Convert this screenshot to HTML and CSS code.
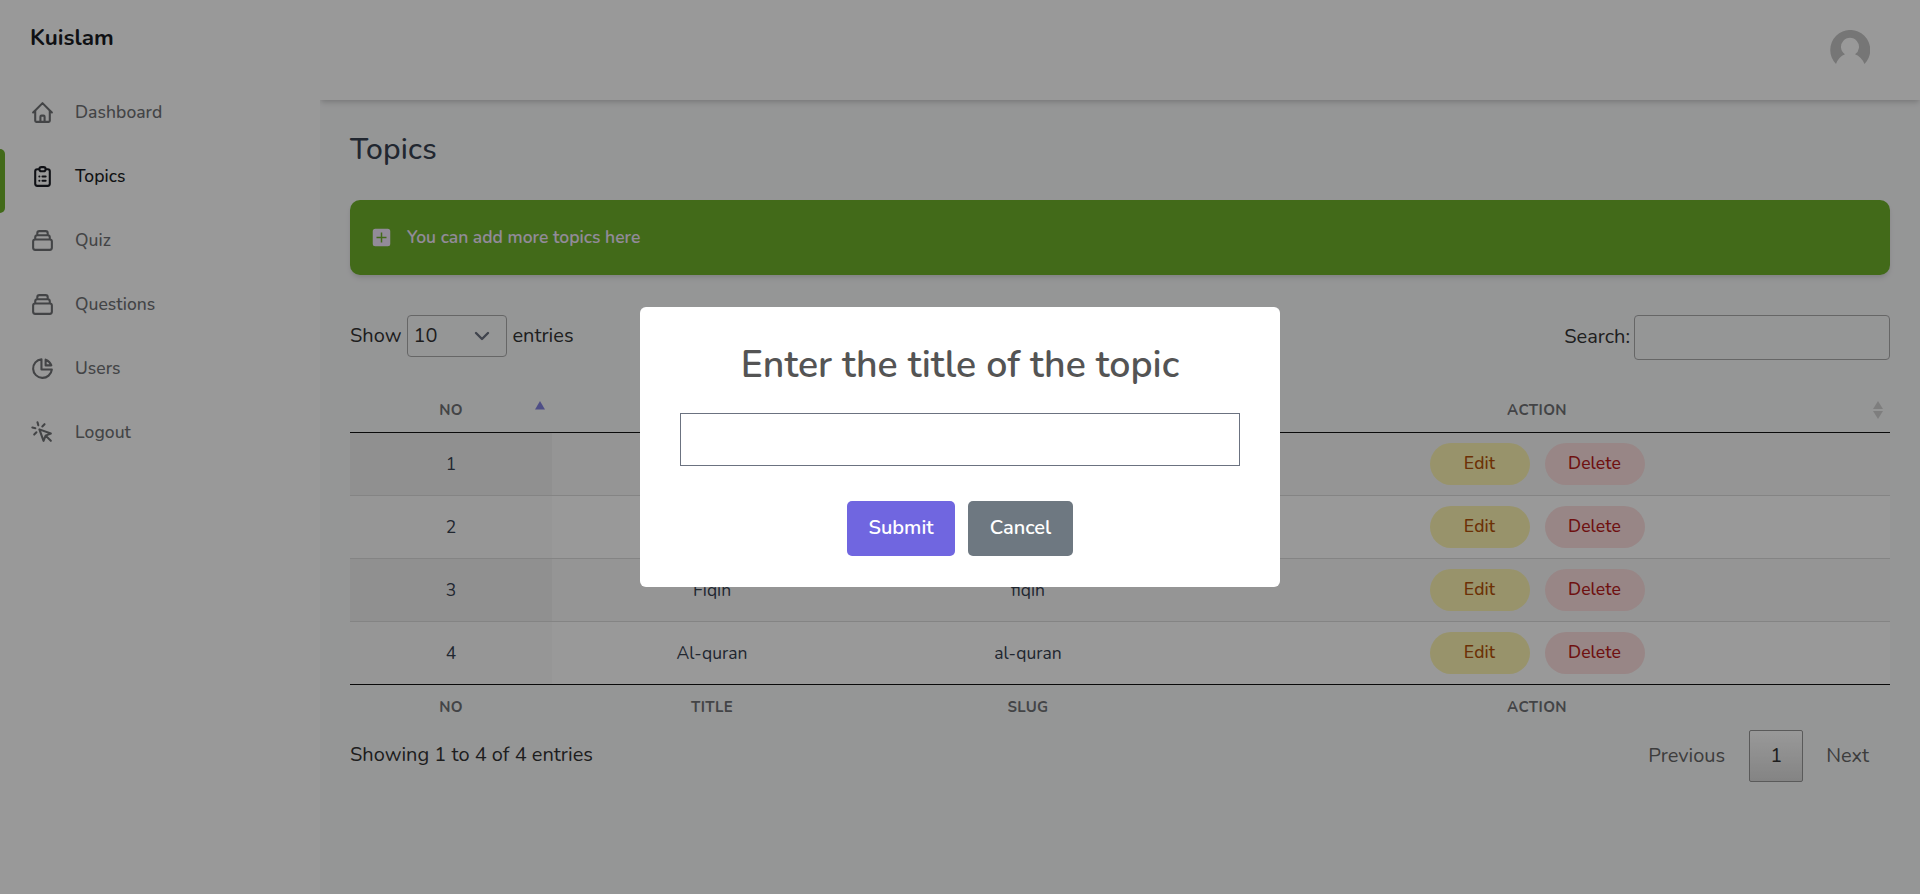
FILE: index.html
```
<!DOCTYPE html>
<html lang="en">
<head>
<meta charset="utf-8">
<title>Kuislam - Topics</title>
<link rel="stylesheet" href="styles.css">
</head>
<body>
<div class="app">
  <aside class="sidebar">
    <a class="brand">Kuislam</a>
    <ul class="nav">
      <li class="nav-item"><svg class="icon" viewBox="0 0 24 24"><path d="M3 12l2-2m0 0l7-7 7 7M5 10v10a1 1 0 001 1h3m10-11l2 2m-2-2v10a1 1 0 01-1 1h-3m-6 0a1 1 0 001-1v-4a1 1 0 011-1h2a1 1 0 011 1v4a1 1 0 001 1m-6 0h6"/></svg><span>Dashboard</span></li>
      <li class="nav-item active"><svg class="icon" viewBox="0 0 24 24"><path d="M9 5H7a2 2 0 00-2 2v12a2 2 0 002 2h10a2 2 0 002-2V7a2 2 0 00-2-2h-2M9 5a2 2 0 002 2h2a2 2 0 002-2M9 5a2 2 0 012-2h2a2 2 0 012 2m-3 7h3m-3 4h3m-6-4h.01M9 16h.01"/></svg><span>Topics</span></li>
      <li class="nav-item"><svg class="icon" viewBox="0 0 24 24"><path d="M19 11H5m14 0a2 2 0 012 2v6a2 2 0 01-2 2H5a2 2 0 01-2-2v-6a2 2 0 012-2m14 0V9a2 2 0 00-2-2M5 11V9a2 2 0 012-2m0 0V5a2 2 0 012-2h6a2 2 0 012 2v2M7 7h10"/></svg><span>Quiz</span></li>
      <li class="nav-item"><svg class="icon" viewBox="0 0 24 24"><path d="M19 11H5m14 0a2 2 0 012 2v6a2 2 0 01-2 2H5a2 2 0 01-2-2v-6a2 2 0 012-2m14 0V9a2 2 0 00-2-2M5 11V9a2 2 0 012-2m0 0V5a2 2 0 012-2h6a2 2 0 012 2v2M7 7h10"/></svg><span>Questions</span></li>
      <li class="nav-item"><svg class="icon" viewBox="0 0 24 24"><path d="M11 3.055A9.001 9.001 0 1020.945 13H11V3.055z"/><path d="M20.488 9H15V3.512A9.025 9.025 0 0120.488 9z"/></svg><span>Users</span></li>
      <li class="nav-item"><svg class="icon" viewBox="0 0 24 24"><path d="M15 15l-2 5L9 9l11 4-5 2zm0 0l5 5M7.188 2.239l.777 2.897M5.136 7.965l-2.898-.777M13.95 4.05l-2.122 2.122m-5.657 5.656l-2.12 2.122"/></svg><span>Logout</span></li>
    </ul>
  </aside>
  <div class="content">
    <header class="topbar">
      <svg class="avatar" viewBox="0 0 40 40"><path d="M6 34A20 20 0 1 1 34.500 34Q31.500 27 25 24.300A9 9 0 1 0 15 24.300Q8.500 27 6 34Z"/></svg>
    </header>
    <main class="main">
      <h2 class="title">Topics</h2>
      <a class="banner"><svg class="plus" viewBox="0 0 20 20"><path fill-rule="evenodd" d="M5 3a2 2 0 00-2 2v10a2 2 0 002 2h10a2 2 0 002-2V5a2 2 0 00-2-2H5zm4.400 3v3.400H6v1.200h3.400V14h1.200v-3.400H14V9.400h-3.400V6z"/></svg><span>You can add more topics here</span></a>
      <div class="controls">
        <div class="length"><span>Show</span><span class="select"><span>10</span><svg viewBox="0 0 20 20"><path d="M6 8l4 4 4-4"/></svg></span><span>entries</span></div>
        <label class="search"><span>Search:</span><input type="text"></label>
      </div>
      <div class="table">
        <div class="row head"><div>NO<svg class="sort" viewBox="0 0 10 18"><path class="asc" d="M0 8.500L5 0l5 8.500z"/></svg></div><div>TITLE</div><div>SLUG</div><div>ACTION<svg class="sort" viewBox="0 0 10 18"><path class="idle" d="M0 8L5 0l5 8zM0 10h10l-5 8z"/></svg></div></div>
        <div class="row odd"><div>1</div><div></div><div></div><div class="actions"><span class="pill edit">Edit</span><span class="pill delete">Delete</span></div></div>
        <div class="row even"><div>2</div><div></div><div></div><div class="actions"><span class="pill edit">Edit</span><span class="pill delete">Delete</span></div></div>
        <div class="row odd"><div>3</div><div>Fiqih</div><div>fiqih</div><div class="actions"><span class="pill edit">Edit</span><span class="pill delete">Delete</span></div></div>
        <div class="row even"><div>4</div><div>Al-quran</div><div>al-quran</div><div class="actions"><span class="pill edit">Edit</span><span class="pill delete">Delete</span></div></div>
        <div class="row foot"><div>NO</div><div>TITLE</div><div>SLUG</div><div>ACTION</div></div>
      </div>
      <div class="bottom">
        <div class="info">Showing 1 to 4 of 4 entries</div>
        <div class="pager"><span class="page">Previous</span><span class="page current">1</span><span class="page">Next</span></div>
      </div>
    </main>
  </div>
</div>
<div class="overlay">
  <div class="modal">
    <h2 class="modal-title">Enter the title of the topic</h2>
    <input class="modal-input" type="text">
    <div class="modal-actions"><button class="btn submit">Submit</button><button class="btn cancel">Cancel</button></div>
  </div>
</div>
</body>
</html>
```
FILE: styles.css
```
* { box-sizing: border-box; }
html { font-size: 20px; }
body { margin: 0; font-family: Nunito, Lato, sans-serif; color: #333; line-height: 1.5; overflow: hidden; }
h2 { margin: 0; }
.app { display: flex; height: 894px; background: #f9fafb; }
.sidebar { position: relative; z-index: 2; width: 320px; background: #fff; padding-top: 21px; }
.brand { display: block; height: 64px; padding-left: 30px; font-size: 22.5px; line-height: 34px; font-weight: 700; color: #1a1c23; }
.nav { list-style: none; margin: 0; padding: 0; font-size: 17.5px; font-weight: 550; letter-spacing: .05px; color: #707275; }
.nav-item { display: flex; gap: 20px; height: 64px; padding: 15px 30px 24px; line-height: 25px; }
.active { color: #1a1c23; position: relative; }
.active::before { content: ""; position: absolute; left: 0; top: 0; width: 5px; height: 64px; background: #6eb12b; border-radius: 0 5px 5px 0; }
.icon { width: 25px; height: 25px; fill: none; stroke: currentColor; stroke-width: 2; stroke-linecap: round; stroke-linejoin: round; }

.content { flex: 1; }
.topbar { position: relative; height: 100px; background: #fff; display: flex; justify-content: flex-end; align-items: center; padding-right: 50px; box-shadow: 0 4px 6px -1px rgba(0,0,0,.13), 0 2px 4px -1px rgba(0,0,0,.08); }
.avatar { width: 40px; height: 40px; fill: #c5c5c5; }
.main { padding: 30px; }
.title { font-size: 30px; line-height: 40px; height: 70px; font-weight: 500; letter-spacing: .15px; color: #374151; }
.banner { display: flex; align-items: center; gap: 13px; height: 75px; padding: 0 19px; background: #6eb12b; border-radius: 10px; color: #f3e8ff; font-size: 17.5px; font-weight: 600; box-shadow: 0 4px 6px -1px rgba(0,0,0,.1), 0 2px 4px -1px rgba(0,0,0,.06); }
.plus { width: 25px; height: 25px; fill: #f3e8ff; }

.controls { display: flex; justify-content: space-between; align-items: flex-start; height: 112px; padding-top: 40px; }
.length { display: flex; align-items: center; gap: 5px; height: 42px; }
.select { display: flex; align-items: center; justify-content: space-between; width: 100px; height: 42px; margin-left: 1px; padding: 0 9px 0 5px; border: 1px solid #aaa; border-radius: 4px; }
.select svg { width: 30px; height: 30px; fill: none; stroke: #6b7280; stroke-width: 1.600; stroke-linecap: round; stroke-linejoin: round; }
.search { display: flex; align-items: center; gap: 4px; }
.search span { padding-bottom: 2px; }
.search input { width: 256px; height: 45px; border: 1px solid #aaa; border-radius: 4px; background: transparent; }

.row { display: grid; grid-template-columns: 202px 320px 312px 706px; height: 63px; border-top: 1px solid #ddd; color: #374151; font-size: 17.5px; text-align: center; }
.row > div { display: flex; align-items: center; justify-content: center; position: relative; }
.head, .foot { border: 0; font-size: 15px; font-weight: 700; letter-spacing: .375px; color: #707275; }
.head { height: 46px; padding-top: 1px; border-bottom: 1px solid #111; }
.head + .row { height: 62px; border-top: 0; }
.foot { height: 45px; border-top: 1px solid #111; }
.odd { background: #f9f9f9; }
.odd > div:first-child { background: #f1f1f1; }
.even { background: #fff; }
.even > div:first-child { background: #fafafa; }
.sort { position: absolute; right: 7px; top: 13px; width: 10px; height: 18px; }
.asc { fill: #8382e0; }
.idle { fill: #d3d3d3; }
.actions { gap: 15px; }
.pill { width: 100px; height: 42px; line-height: 41px; border-radius: 21px; font-weight: 500; letter-spacing: .1px; }
.edit { background: #fdf6b2; color: #b45309; }
.delete { background: #fde0e0; color: #b91c1c; }

.bottom { display: flex; justify-content: space-between; padding-top: 1px; }
.info { padding-top: 10px; }
.pager { display: flex; gap: 2px; }
.page { height: 52px; line-height: 50px; padding: 0 20px; border: 1px solid transparent; color: #666; }
.page:first-child { margin-right: 1px; }
.current { border-color: #979797; border-radius: 2px; color: #333; background: linear-gradient(#fff, #dcdcdc); }

.overlay { position: fixed; inset: 0; z-index: 10; display: flex; align-items: center; justify-content: center; background: rgba(0,0,0,.4); }
.modal { width: 640px; height: 280px; padding: 34px 40px 0; background: #fff; border-radius: 6px; }
.modal-title { font-size: 37.5px; line-height: 48px; font-weight: 600; color: #545454; text-align: center; }
.modal-input { display: block; width: 560px; height: 53px; margin-top: 24px; border: 1px solid #6b7280; background: #fff; }
.modal-actions { display: flex; justify-content: center; gap: 13px; margin-top: 35px; }
.btn { height: 55px; border: 0; border-radius: 5px; padding: 0 0 2px; font: 600 20px Nunito, Lato, sans-serif; color: #fff; }
.submit { width: 108px; background: #7066e0; }
.cancel { width: 105px; background: #6e7881; }
```
